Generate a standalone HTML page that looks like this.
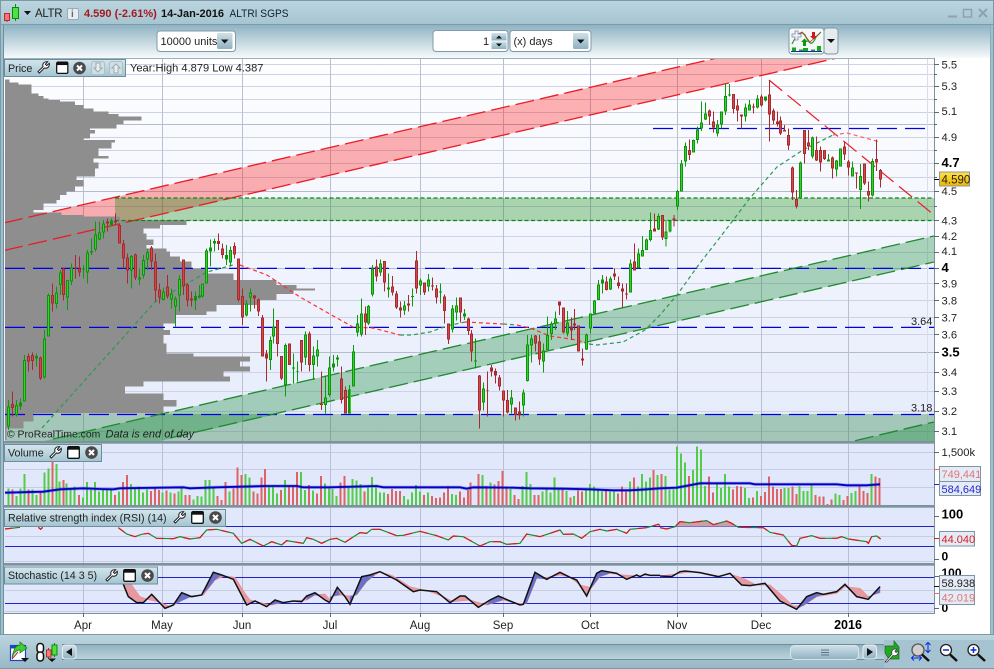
<!DOCTYPE html>
<html><head><meta charset="utf-8"><title>ALTR</title>
<style>
html,body{margin:0;padding:0;width:994px;height:669px;overflow:hidden;background:#fff}
svg{display:block}
text{font-family:"Liberation Sans",Arial,sans-serif;font-size:11px;fill:#222}
.b{font-weight:bold}
.ax{font-size:11.2px;fill:#222}
.lab{font-size:11px}
.cw{fill:none;stroke-width:3}
.cb{fill:none;stroke-width:9}
.ci{fill:none;stroke-width:3}
</style></head><body>
<svg width="994" height="669" viewBox="0 0 994 669" xmlns="http://www.w3.org/2000/svg">
<defs>
<linearGradient id="gT" x1="0" y1="0" x2="0" y2="1"><stop offset="0" stop-color="#bcd6e0"/><stop offset="1" stop-color="#a6c5d2"/></linearGradient>
<linearGradient id="gTool" x1="0" y1="0" x2="0" y2="1"><stop offset="0" stop-color="#8fb3c3"/><stop offset="1" stop-color="#f6fafb"/></linearGradient>
<linearGradient id="gPlot" x1="0" y1="0" x2="0" y2="1"><stop offset="0" stop-color="#fefeff"/><stop offset="1" stop-color="#e5ebfb"/></linearGradient>
<linearGradient id="gTab" x1="0" y1="0" x2="0" y2="1"><stop offset="0" stop-color="#d4e6ed"/><stop offset="1" stop-color="#a3c4d1"/></linearGradient>
<linearGradient id="gBtn" x1="0" y1="0" x2="0" y2="1"><stop offset="0" stop-color="#cfe0e7"/><stop offset="1" stop-color="#8fb1c1"/></linearGradient>
<linearGradient id="gBot" x1="0" y1="0" x2="0" y2="1"><stop offset="0" stop-color="#bcd5de"/><stop offset="1" stop-color="#97b8c6"/></linearGradient>
<linearGradient id="gTrack" x1="0" y1="0" x2="0" y2="1"><stop offset="0" stop-color="#8fb0be"/><stop offset="1" stop-color="#bcd4dc"/></linearGradient>
<linearGradient id="gGold" x1="0" y1="0" x2="0" y2="1"><stop offset="0" stop-color="#ffe14a"/><stop offset="1" stop-color="#f0b400"/></linearGradient>
<clipPath id="cP"><rect x="5" y="59" width="929" height="382"/></clipPath>
<clipPath id="cV"><rect x="5" y="444" width="929" height="61"/></clipPath>
<symbol id="wr" viewBox="0 0 14 14"><path d="M1 11.5 L6.5 6 C5.5 3 7.5 .2 11.5 .8 L9 3.5 L10.5 5 L13.2 2.5 C13.8 6.5 11 8.5 8 7.5 L2.5 13 Z" fill="#fff" stroke="#111" stroke-width="1"/></symbol>
<symbol id="wi" viewBox="0 0 13 13"><rect x=".7" y=".7" width="11.6" height="11.6" rx="1.2" fill="#fff" stroke="#111" stroke-width="1.3"/><rect x=".7" y=".7" width="11.6" height="3" fill="#111"/></symbol>
<symbol id="cl" viewBox="0 0 13 13"><circle cx="6.5" cy="6.5" r="6.3" fill="#4a4a4a"/><path d="M4 4L9 9M9 4L4 9" stroke="#fff" stroke-width="2"/></symbol>
</defs>

<!-- chrome -->
<rect width="994" height="669" fill="#9dc0ce"/>
<rect x="0" y="0" width="994" height="24" fill="url(#gT)"/>
<rect x="0" y="0" width="994" height="1" fill="#7e98a5"/>
<rect x="0" y="24" width="994" height="1" fill="#7c9cab"/>
<rect x="4" y="25" width="986" height="33" fill="url(#gTool)"/>
<rect x="4" y="58" width="986" height="577" fill="#fff"/>
<rect x="0" y="0" width="1" height="669" fill="#7e98a5"/>
<rect x="3" y="25" width="1" height="610" fill="#6f8e9c"/>
<rect x="993" y="0" width="1" height="669" fill="#7e98a5"/>
<rect x="990" y="25" width="1" height="610" fill="#8fa9b5"/>

<!-- title bar -->
<g>
<path d="M7 14V22" stroke="#a03030"/><rect x="4.500" y="13.500" width="5" height="7" fill="#ff7070" stroke="#b03030"/>
<path d="M15.500 4V21" stroke="#0a8a0a"/><rect x="12.500" y="7.500" width="6" height="11" fill="#50e040" stroke="#0a8a0a"/>
<path d="M24 11H31L27.500 15Z" fill="#111"/>
</g>
<text x="35" y="17" style="font-size:11.500px" textLength="27.500">ALTR</text>
<rect x="67.500" y="8.500" width="11" height="11" rx="1.500" fill="#e8eef0" stroke="#9ab"/>
<text x="71" y="17" class="b" style="fill:#667;font-size:10px">i</text>
<text x="84" y="17" class="b" style="fill:#a31a1e;font-size:11px">4.590 (-2.61%)</text>
<text x="161" y="17" class="b" style="font-size:11px;fill:#111">14-Jan-2016</text>
<text x="229.500" y="17" style="font-size:11px;fill:#123" textLength="59" lengthAdjust="spacingAndGlyphs">ALTRI SGPS</text>
<rect x="948" y="15.500" width="9" height="2" fill="#8da3af"/>
<rect x="963.500" y="9.500" width="8" height="7.500" fill="none" stroke="#8da3af" stroke-width="1.500"/>
<path d="M979 9L987 17M987 9L979 17" stroke="#8da3af" stroke-width="2"/>

<!-- toolbar -->
<rect x="157" y="31" width="78.500" height="20.500" rx="3" fill="#fff" stroke="#7f9aa8"/>
<text x="160.500" y="45" style="font-size:11px">10000 units</text>
<rect x="217" y="33" width="15.500" height="16" rx="1.500" fill="url(#gBtn)"/>
<path d="M221 39.500H228.500L224.700 43.500Z" fill="#111"/>
<rect x="433" y="30.500" width="75" height="21" rx="3" fill="#fff" stroke="#7f9aa8"/>
<text x="483" y="45" style="font-size:11px">1</text>
<rect x="491.500" y="33" width="15" height="7.500" fill="url(#gBtn)"/><rect x="491.500" y="41.500" width="15" height="7.500" fill="url(#gBtn)"/>
<path d="M496 38.500H502L499 35.500Z M496 43.500H502L499 46.500Z" fill="#111"/>
<rect x="510" y="30.500" width="81" height="21" rx="3" fill="#fff" stroke="#7f9aa8"/>
<text x="513.500" y="45" style="font-size:11px">(x) days</text>
<rect x="573" y="33" width="15.500" height="16" rx="1.500" fill="url(#gBtn)"/>
<path d="M577 39.500H584.500L580.700 43.500Z" fill="#111"/>
<rect x="789" y="28" width="35" height="26" rx="3" fill="#f4f7f8" stroke="#7f9aa8"/>
<rect x="824" y="28" width="14" height="26" rx="3" fill="#e6ebee" stroke="#7f9aa8"/>
<path d="M827 39H835L831 43Z" fill="#111"/>
<path d="M792 44C797 34 801 30 805 35C809 44 812 47 816 37L821 32" fill="none" stroke="#2a9a2a" stroke-width="1.200"/>
<path d="M795 39 L802 32 L810 42 L820 33" fill="none" stroke="#c03030" stroke-width=".8"/>
<path d="M795 31H798V34H801V37H798V40H795V37H792V34H795Z" fill="#eef" stroke="#889" stroke-width=".8"/>
<path d="M803 46V42H801L804.500 38.500L808 42H806V46Z" fill="#0a9a0a"/>
<path d="M812 32V36H810L813.500 39.500L817 36H815V32Z" fill="#d01818"/>
<path d="M792 51V47.500H796V51ZM799 51V49.500H803V51ZM803 51V48H808V51ZM811 51V49.500H815V51ZM817 51V46H821V51Z" fill="#0fae0f"/>
<rect x="791" y="51" width="31" height="1" fill="#2222bb"/>

<!-- price plot -->
<rect x="4" y="58" width="930" height="383" fill="url(#gPlot)"/>
<g stroke="#cdd2e4" stroke-width="1" fill="none" shape-rendering="crispEdges">
<path d="M5 64.500H934M5 74.500H934M5 86.500H934M5 99.500H934M5 112.500H934M5 137.500H934M5 150.500H934M5 163.500H934M5 177.500H934M5 206.500H934M5 220.500H934M5 236.500H934M5 252.500H934M5 283.500H934M5 300.500H934M5 317.500H934M5 334.500H934M5 372.500H934M5 391.500H934M5 411.500H934M5 431.500H934"/>
<path stroke="#b4bbcb" d="M5 124.500H934M5 191.500H934M5 268.500H934M5 352.500H934"/>
<path stroke="#b9c0d2" d="M83.500 59V441M162.500 59V441M242.500 59V441M330.500 59V441M420.500 59V441M503.500 59V441M590.500 59V441M677.500 59V441M761.500 59V441M848.500 59V441"/>
<path stroke="#d8ddec" d="M927.500 59V441"/>
</g>
<g clip-path="url(#cP)">
<polygon points="4,222.900 717,58 837,58 4,251" fill="#ff0000" fill-opacity=".3"/>
<rect x="115" y="198" width="819" height="22.500" fill="#008000" fill-opacity=".3"/>
<rect x="4" y="414" width="930" height="27" fill="#0a7020" fill-opacity=".3"/>
<polygon points="44,441 934,236 934,262 160,441" fill="#008020" fill-opacity=".3"/>
<polygon points="855,441 934,422 934,441" fill="#008020" fill-opacity=".3"/>
<!-- volume profile -->
<g fill="#8e8e8e" shape-rendering="crispEdges">
<path transform="translate(0,70) scale(.33333)" d="M12 28H28V38H55V43H95V70H115V78H130V86H145V90H180V95H225V105H250V115H280V125H325V132H355V140H425V152H370V162H350V175H270V180H285V190H270V205H250V210H345V218H335V235H295V258H325V265H280V278H295V295H285V320H230V335H250V350H215V355H185V361H12Z"/>
<path transform="translate(0,180) scale(.33333)" d="M12 0H250V5H245V20H225V35H200V45H180V60H170V70H130V80H130V90H100V98H185V105H250V110H360V120H560V135H480V145H430V160H440V178H460V195H440V205H500V215H510V230H540V245H575V265H620V280H700V300H830V315H890V325H945V332H880V342H830V360H780V375H650V395H620V405H525V430H490V450H510V465H490V490H500V520H580V530H750V545H720V560H750V575H670V590H690V605H430V620H375V640H490V660H530V680H490V700H100V725H70V745H20V780H12Z"/>
</g>
<!-- blue levels -->
<g stroke="#0000e6" stroke-width="1.300" stroke-dasharray="20 8" fill="none">
<path d="M653 128.500H930"/>
<path d="M5 268.400H934"/>
<path d="M5 327.400H934"/>
<path d="M5 414.500H934"/>
</g>
<!-- channel lines -->
<g fill="none" stroke-width="1.300" stroke-dasharray="19 6">
<path d="M4 222.900L717 58M4 250.500L837 58" stroke="#ea1c24"/>
<path d="M53 439L934 236M170 438L934 262M855 440.700L934 422" stroke="#1f8a2c"/>
</g>
<path d="M115 198H934" stroke="#0a8a0a" stroke-dasharray="4 2.500" stroke-width="1.200"/>
<path d="M115 220.500H934" stroke="#0a8a0a" stroke-dasharray="4 2.500" stroke-width="1.200"/>
<!-- trend -->
<path d="M769 80L934 215" fill="none" stroke="#ea1c24" stroke-width="1.200" stroke-dasharray="17 7"/>
<!-- MA -->
<g fill="none" stroke-width="1.200" stroke-dasharray="4 3">
<path stroke="#2a9a50" d="M42 428L155 302L207 272L233 265"/>
<path stroke="#ff3030" d="M240 265L267 275L300 297L328 313L353 327L373 328L400 335"/>
<path stroke="#2a9a50" d="M400 335L412 335L430 332L447 326L465 322"/>
<path stroke="#ff3030" d="M465 322L503 324"/>
<path stroke="#2a9a50" d="M503 324L517 325"/>
<path stroke="#ff3030" d="M517 325L530 328L550 336L577 340L589 344"/>
<path stroke="#2a9a50" d="M589 344L597 345L623 342L645 330L660 315L677 295L700 263L718 240L750 198L777 167L803 150L833 135"/>
<path stroke="#ff6060" d="M833 135L847 133L880 142"/>
</g>
<!-- candles, set 1 -->
<g transform="translate(0,180) scale(.33333)" shape-rendering="crispEdges">
<path class="cw" stroke="#0a9a0a" d="M25 660V750M49 660V710M61 655V690M73 525V665M109 520V560M133 450V595M145 340V470M169 320V385M181 270V345M203 300V390M215 250V315M251 255V295M263 210V310M275 175V225M287 125V215M299 125V180M311 120V175M335 115V140M395 225V325M419 265V315M431 225V295M443 205V270M491 322V362M515 325V385M527 350V440M539 285V395M587 335V390M599 315V355M607 310V352M619 205V310M631 178V260M643 175V215M679 195V255M691 200V260M739 360V410M751 325V395M811 470V570M821 385V490M857 490V650M881 520V610M893 545V605M917 455V555M941 500V600M953 480V560M977 590V700M989 530V650"/>
<path class="cb" stroke="#0a960a" d="M25 680V740M49 675V705M61 667V680M73 540V665M109 528V535M133 475V592M145 345V470M169 338V372M181 277V315M203 300V352M215 262V305M251 265V268M263 217V278M275 213V218M287 163V208M299 157V178M311 130V158M335 122V135M395 228V272M419 292V298M431 240V287M443 216V238M491 335V360M515 340V358M527 355V380M539 297V347M587 348V362M599 346V352M607 310V350M619 211V310M631 202V215M643 183V190M679 225V238M691 210V247M739 370V407M751 337V352M811 480V540M821 440V470M857 495V615M881 562V565M893 573V575M917 463V533M941 527V555M953 508V530M977 652V675M989 563V645"/>
<path class="ci" stroke="#40cc30" d="M25 683V737M49 678V702M73 543V662M133 478V589M145 348V467M169 341V369M181 280V312M203 303V349M215 265V302M263 220V275M287 166V205M299 160V175M311 133V155M395 231V269M431 243V284M443 219V235M491 338V357M515 343V355M527 358V377M539 300V344M607 313V347M619 214V307M691 213V244M739 373V404M751 340V349M811 483V537M821 443V467M857 498V612M917 466V530M941 530V552M953 511V527M977 655V672M989 566V642"/>
<path class="cw" stroke="#a82a2e" d="M37 635V710M85 520V575M97 518V570M121 530V600M157 310V395M191 262V362M227 225V295M239 230V290M323 115V155M347 100V135M359 130V190M371 180V265M383 220V310M407 220V300M455 198V270M467 220V365M479 310V370M503 285V355M551 238V345M563 310V380M575 335V380M655 160V210M667 190V235M703 188V235M715 235V365M727 325V435M763 345V385M775 355V408M787 405V530M799 510V605M833 420V530M845 530V600M869 490V555M905 480V575M929 455V575M965 575V690"/>
<path class="cb" stroke="#a82a2e" d="M37 672V684M85 528V545M97 525V543M121 533V595M157 345V370M191 265V345M227 262V265M239 265V278M323 125V130M347 122V127M359 135V190M371 190V235M383 232V272M407 223V293M455 202V245M467 245V332M479 328V352M503 320V350M551 238V320M563 313V362M575 355V362M655 183V192M667 205V225M703 198V223M715 235V360M727 348V413M763 346V355M775 358V395M787 412V530M799 520V535M833 420V492M845 528V595M869 490V555M905 480V548M929 460V555M965 672V675"/>
<path class="ci" stroke="#d04848" d="M37 675V681M85 531V542M97 528V540M121 536V592M157 348V367M191 268V342M239 268V275M359 138V187M371 193V232M383 235V269M407 226V290M455 205V242M467 248V329M479 331V349M503 323V347M551 241V317M563 316V359M667 208V222M703 201V220M715 238V357M727 351V410M775 361V392M787 415V527M833 423V489M845 531V592M869 493V552M905 483V545M929 463V552"/>
</g>
<!-- candles, set 2 -->
<g transform="translate(330,200) scale(.33333)" shape-rendering="crispEdges">
<path class="cw" stroke="#0a9a0a" d="M10 465V515M22 465V500M58 555V640M70 435V560M82 345V410M94 295V410M116 315V375M128 195V290M152 178V228M175 220V293M223 303V345M247 265V320M271 235V285M295 222V275M331 250V310M367 315V398M379 292V362M403 327V360M436 415V505M460 548V632M544 570V640M580 568V650M592 405V545M604 405V488M640 430V518M652 350V450M664 365V420M676 335V390M712 333V410M769 400V450M781 340V400M793 300V340M805 240V300M817 225V280M841 230V270M901 178V278M925 145V205M937 108V170M949 115V150M961 38V125M985 40V90"/>
<path class="cb" stroke="#0a960a" d="M10 490V503M22 472V478M58 568V640M70 455V560M82 370V397M94 340V403M116 318V370M128 205V283M152 190V218M175 262V268M223 316V332M247 288V291M271 241V256M295 238V260M331 274V278M367 325V388M379 316V338M403 340V350M436 481V485M460 565V607M544 592V613M580 577V617M592 433V543M604 415V437M640 452V485M652 405V450M664 370V402M676 355V370M712 367V400M769 403V448M781 340V385M793 302V340M805 253V300M817 238V250M841 235V268M901 190V278M925 160V204M937 150V170M949 118V150M961 90V120M985 48V88"/>
<path class="ci" stroke="#40cc30" d="M61 571V637M70 458V557M82 373V394M94 343V400M116 321V367M128 208V280M152 193V215M223 319V329M271 244V253M295 241V257M367 328V385M379 319V335M460 568V604M544 595V610M580 580V614M592 436V540M604 418V434M640 455V482M652 408V447M664 373V399M676 358V367M712 370V397M769 406V445M781 343V382M793 305V337M805 256V297M841 238V265M901 193V275M925 163V201M937 153V167M949 121V147M961 93V117M985 51V85"/>
<path class="cw" stroke="#a82a2e" d="M34 500V610M46 560V640M106 320V405M140 178V245M163 183V275M187 228V287M199 273V327M211 305V352M235 285V335M259 153V280M283 247V285M307 232V272M319 255V310M343 283V370M355 370V432M391 292V368M415 352V405M424 390V485M448 525V685M472 515V650M484 495V530M496 505V550M508 525V572M520 572V650M532 570V640M556 622V662M568 605V658M616 405V455M628 405V495M688 305V345M700 322V400M724 352V420M733 327V390M745 377V455M757 445V497M829 230V272M853 205V240M865 230V265M877 250V323M889 250V298M913 130V212M973 40V95"/>
<path class="cb" stroke="#a82a2e" d="M34 535V600M46 570V640M106 340V368M140 200V230M163 183V248M187 260V277M199 280V322M211 322V332M235 310V316M259 182V265M283 248V277M307 256V260M319 265V292M343 290V333M355 370V418M391 292V338M415 355V393M424 400V455M448 527V632M472 570V572M484 502V515M496 513V526M508 532V560M520 572V602M532 600V638M556 622V645M568 634V646M616 406V430M628 424V478M688 305V316M700 322V398M724 380V392M733 370V376M745 377V455M757 475V482M829 244V270M853 220V230M865 247V258M877 265V275M889 280V283M913 185V211M973 85V95"/>
<path class="ci" stroke="#d04848" d="M34 538V597M46 573V637M106 343V365M140 203V227M163 186V245M187 263V274M199 283V319M259 185V262M283 251V274M319 268V289M343 293V330M355 373V415M391 295V335M415 358V390M424 403V452M448 530V629M508 535V557M520 575V599M532 603V635M556 625V642M616 409V427M628 427V475M700 325V395M745 380V452M829 247V267M913 188V208"/>
</g>
<!-- candles, set 3 -->
<g transform="translate(660,0) scale(.33333)" shape-rendering="crispEdges">
<path class="cw" stroke="#0a9a0a" d="M18 660V740M30 660V697M52 570V630M64 480V575M76 428V500M100 418V458M112 380V430M124 305V393M136 308V360M172 360V410M184 335V385M196 250V345M208 252V290M256 310V365M268 300V332M292 285V325M316 290V305M421 485V597M457 410V475M505 462V485M529 480V530M541 445V500M577 485V530M601 492V627M637 475V590"/>
<path class="cb" stroke="#0a960a" d="M18 695V717M30 662V695M52 573V620M64 490V575M76 438V485M100 420V458M112 388V420M124 367V385M136 340V358M172 373V400M184 335V373M196 288V335M208 283V287M256 322V350M268 313V332M292 295V323M316 290V302M421 487V595M457 412V470M505 478V485M529 482V508M541 445V500M577 502V530M601 528V570M637 483V587"/>
<path class="ci" stroke="#40cc30" d="M18 698V714M30 665V692M52 576V617M64 493V572M76 441V482M100 423V455M112 391V417M124 370V382M136 343V355M172 376V397M184 338V370M196 291V332M256 325V347M268 316V329M292 298V320M421 490V592M457 415V467M529 485V505M541 448V497M577 505V527M601 531V567M637 486V584"/>
<path class="cw" stroke="#a82a2e" d="M8 645V720M42 645V680M88 418V480M148 328V375M160 335V398M220 282V340M232 297V365M244 343V385M280 310V340M304 283V320M328 240V425M340 325V372M352 335V380M362 350V405M374 375V395M386 385V450M397 500V600M409 570V625M433 390V490M445 390V450M469 410V483M481 440V515M493 450V480M517 470V535M553 425V480M565 480V527M589 518V565M613 490V555M625 545V605M649 418V513M661 507V563"/>
<path class="cb" stroke="#a82a2e" d="M8 645V712M42 655V662M88 450V465M148 332V350M160 365V383M220 282V327M232 316V332M244 343V350M280 320V323M304 290V317M328 283V343M340 332V362M352 365V372M362 362V400M374 390V395M386 405V436M397 502V577M409 597V620M433 390V462M445 427V440M469 450V482M481 450V487M493 450V477M517 472V505M553 440V463M565 484V502M589 518V520M613 490V550M625 573V587M649 477V488M661 510V538"/>
<path class="ci" stroke="#d04848" d="M8 648V709M88 453V462M148 335V347M160 368V380M220 285V324M232 319V329M304 293V314M328 286V340M340 335V359M362 365V397M386 408V433M397 505V574M409 600V617M433 393V459M445 430V437M469 453V479M481 453V484M493 453V474M517 475V502M553 443V460M565 487V499M613 493V547M625 576V584M649 480V485M661 513V535"/>
</g>
<text x="911" y="325" style="font-size:11px;fill:#222">3.64</text>
<text x="911" y="411.500" style="font-size:11px;fill:#222">3.18</text>
<text x="7" y="437.500" style="font-size:10.400px;fill:#222">© ProRealTime.com</text>
<text x="105.500" y="437.500" style="font-size:11px;font-style:italic;fill:#222">Data is end of day</text>
</g>
<rect x="4" y="441" width="930" height="2" fill="#7f929c"/>
<rect x="4" y="58" width="930" height="1" fill="#9bb0bb"/>

<!-- volume panel -->
<rect x="4" y="444" width="930" height="61" fill="#e1e8fb"/>
<g stroke="#c6cde2" fill="none" shape-rendering="crispEdges"><path d="M5 452.500H934M5 469.500H934M5 487.500H934"/><path stroke="#b9c0d2" d="M83.500 444V505M162.500 444V505M242.500 444V505M330.500 444V505M420.500 444V505M503.500 444V505M590.500 444V505M677.500 444V505M761.500 444V505M848.500 444V505"/></g>
<g transform="translate(0,440) scale(.33333)" fill="none" stroke-width="6" shape-rendering="crispEdges">
<path stroke="#53cc47" d="M25 145V195M49 168V195M61 145V195M73 102V195M97 148V195M109 165V195M133 98V195M145 85V195M169 72V195M178 125V195M200 130V195M212 145V195M224 140V195M249 172V195M261 126V195M273 150V195M285 126V195M297 155V195M309 150V195M321 148V195M333 148V195M357 155V195M393 132V195M405 142V195M417 140V195M429 158V195M441 148V195M487 158V195M511 158V195M535 155V195M545 142V195M581 178V195M593 168V195M605 170V195M617 120V195M629 120V195M641 140V195M689 155V195M737 102V195M749 112V195M807 138V195M819 138V195M831 160V195M855 120V195M903 96V195M915 150V195M939 152V195M975 130V195M987 145V195"/>
<path stroke="#dd6464" d="M37 148V195M85 148V195M121 155V195M157 65V195M190 120V195M237 165V195M345 165V195M369 126V195M381 105V195M453 153V195M465 145V195M477 150V195M499 152V195M523 160V195M557 165V195M569 165V195M653 168V195M665 180V195M677 126V195M701 145V195M713 83V195M725 105V195M761 155V195M773 160V195M785 113V195M795 87V195M843 150V195M867 140V195M879 140V195M891 96V195M927 135V195M951 160V195M963 108V195"/>
</g>
<g transform="translate(330,440) scale(.33333)" fill="none" stroke-width="6" shape-rendering="crispEdges">
<path stroke="#53cc47" d="M8 147V195M20 168V195M56 140V195M68 117V195M80 122V195M92 132V195M114 140V195M126 111V195M138 140V195M150 158V195M162 158V195M222 168V195M234 178V195M246 158V195M258 135V195M270 155V195M294 158V195M366 162V195M378 165V195M458 105V195M482 128V195M542 147V195M578 138V195M590 96V195M602 132V195M638 155V195M650 147V195M662 158V195M674 113V195M686 147V195M710 153V195M732 168V195M768 150V195M780 132V195M792 140V195M804 152V195M816 155V195M840 155V195M852 155V195M900 125V195M924 140V195M936 102V195M948 125V195M960 113V195M982 105V195"/>
<path stroke="#dd6464" d="M32 128V195M44 108V195M104 155V195M174 162V195M186 147V195M198 153V195M210 153V195M282 165V195M306 168V195M318 174V195M330 172V195M342 158V195M354 138V195M390 155V195M402 173V195M414 150V195M422 128V195M446 102V195M470 138V195M494 134V195M506 123V195M518 93V195M530 140V195M554 165V195M566 177V195M614 165V195M626 165V195M698 147V195M722 173V195M744 152V195M756 155V195M828 150V195M864 160V195M876 140V195M888 155V195M912 113V195M970 90V195"/>
</g>
<g transform="translate(660,440) scale(.33333)" fill="none" stroke-width="6" shape-rendering="crispEdges">
<path stroke="#53cc47" d="M17 108V195M29 148V195M41 148V195M51 20V195M63 40V195M75 68V195M99 90V195M111 20V195M123 28V195M135 138V195M171 132V195M183 144V195M195 102V195M207 140V195M255 144V195M267 174V195M291 153V195M373 144V195M385 144V195M419 138V195M431 153V195M443 153V195M455 135V195M527 161V195M539 165V195M575 159V195M587 153V195M635 102V195"/>
<path stroke="#dd6464" d="M5 102V195M87 108V195M147 110V195M159 158V195M219 148V195M231 138V195M243 140V195M279 173V195M303 168V195M315 156V195M327 110V195M339 140V195M351 147V195M363 147V195M397 140V195M409 162V195M467 165V195M479 170V195M491 170V195M503 192V195M515 178V195M551 180V195M563 168V195M599 138V195M611 153V195M623 159V195M647 110V195M659 114V195"/>
</g>
<g clip-path="url(#cV)" fill="none" transform="">
<g transform="translate(0,440) scale(.33333)">
<path stroke="#0000c8" stroke-width="10" stroke-opacity=".25" d="M15 158L130 155L180 148L250 145L300 147L340 148L360 145L550 142L570 145L650 142L800 138L890 138L910 142L990 142L1130 138L1150 142L1380 142L1400 146L1420 142L1540 143L1590 145L1690 146L1770 148L1840 151L1890 151L1940 148L1980 145L2030 143L2100 130L2250 130L2265 133L2510 133L2540 136L2600 136L2640 133"/>
<path stroke="#0000c8" stroke-width="5.500" d="M15 158L130 155L180 148L250 145L300 147L340 148L360 145L550 142L570 145L650 142L800 138L890 138L910 142L990 142L1130 138L1150 142L1380 142L1400 146L1420 142L1540 143L1590 145L1690 146L1770 148L1840 151L1890 151L1940 148L1980 145L2030 143L2100 130L2250 130L2265 133L2510 133L2540 136L2600 136L2640 133"/>
</g>
</g>
<rect x="4" y="505" width="930" height="2" fill="#7f929c"/>
<rect x="4" y="443" width="930" height="1" fill="#9bb0bb"/>

<!-- RSI panel -->
<rect x="4" y="508" width="930" height="55" fill="#e1e8fb"/>
<g stroke="#c6cde2" fill="none" shape-rendering="crispEdges"><path d="M5 536.500H934M5 561.500H934"/><path stroke="#b9c0d2" d="M83.500 508V563M162.500 508V563M242.500 508V563M330.500 508V563M420.500 508V563M503.500 508V563M590.500 508V563M677.500 508V563M761.500 508V563M848.500 508V563"/></g>
<path d="M5 526.500H934M5 546.500H934" stroke="#2222cc" stroke-width="1" shape-rendering="crispEdges"/>
<path transform="translate(660,440) scale(.33333)" d="M45 260L60 245L90 248L140 242L160 254L200 243L215 250L235 260Z" fill="#c9a0ae"/>
<g fill="none" stroke-width="3.600">
<g transform="translate(0,440) scale(.33333)">
<path stroke="#1f8a2c" d="M15 267L60 262M115 262L122 268L128 262M355 263L380 282L405 290L425 283L445 280L470 295L520 296L540 290L570 297L600 293L620 270L650 268L680 275L700 280L725 310L750 298L790 318L815 305L845 315L860 302L910 310L920 293L940 298L965 310L990 298"/>
<path stroke="#e01818" stroke-dasharray="22 20" d="M15 267L60 262M115 262L122 268L128 262M355 263L380 282L405 290L425 283L445 280L470 295L520 296L540 290L570 297L600 293L620 270L650 268L680 275L700 280L725 310L750 298L790 318L815 305L845 315L860 302L910 310L920 293L940 298L965 310L990 298"/>
</g>
<g transform="translate(330,440) scale(.33333)">
<path stroke="#1f8a2c" d="M0 298L20 295L45 307L60 297L90 278L110 280L125 268L150 268L200 287L220 286L270 274L320 287L355 300L370 288L400 290L450 318L480 305L510 305L530 313L570 310L590 282L630 290L690 270L700 283L730 282L755 295L780 275L810 268L830 273L860 268L890 280L900 268L950 263L985 253L990 256"/>
<path stroke="#e01818" stroke-dasharray="26 22" d="M0 298L20 295L45 307L60 297L90 278L110 280L125 268L150 268L200 287L220 286L270 274L320 287L355 300L370 288L400 290L450 318L480 305L510 305L530 313L570 310L590 282L630 290L690 270L700 283L730 282L755 295L780 275L810 268L830 273L860 268L890 280L900 268L950 263L985 253L990 256"/>
</g>
<g transform="translate(660,440) scale(.33333)">
<path stroke="#1f8a2c" d="M0 263L20 267L45 260L60 245L90 248L140 242L160 254L200 243L215 250L235 262L310 263L330 277L370 285L395 316L410 318L420 295L455 287L480 295L530 295L545 290L565 297L620 305L625 310L635 290L650 288L662 297"/>
<path stroke="#e01818" stroke-dasharray="30 22" d="M0 263L20 267L45 260L60 245L90 248L140 242L160 254L200 243L215 250L235 262L310 263L330 277L370 285L395 316L410 318L420 295L455 287L480 295L530 295L545 290L565 297L620 305L625 310L635 290L650 288L662 297"/>
</g>
</g>
<rect x="4" y="563" width="930" height="2" fill="#7f929c"/>
<rect x="4" y="507" width="930" height="1" fill="#9bb0bb"/>

<!-- Stochastic panel -->
<rect x="4" y="566" width="930" height="47" fill="#e1e8fb"/>
<g stroke="#c6cde2" fill="none" shape-rendering="crispEdges"><path d="M5 590.500H934M5 611.500H934"/><path stroke="#b9c0d2" d="M83.500 566V613M162.500 566V613M242.500 566V613M330.500 566V613M420.500 566V613M503.500 566V613M590.500 566V613M677.500 566V613M761.500 566V613M848.500 566V613"/></g>
<path d="M5 577.500H934M5 603.500H934" stroke="#2222cc" stroke-width="1" shape-rendering="crispEdges"/>
<g transform="translate(0,440) scale(.33333)">
<path fill="#e59aa2" stroke="#ea8a92" stroke-width="2" d="M370 433L385 470L410 488L430 488L455 463L495 505L520 495L545 458L575 470L605 465L640 397L665 405L700 418L740 495L765 483L800 500L825 480L850 488L880 483L905 485L920 468L945 458L975 480L990 488L990 480L975 462L945 465L920 480L880 482L850 487L815 495L790 490L750 480L735 460L705 412L675 408L645 420L610 465L570 468L540 485L510 500L480 487L450 480L420 470L395 435L370 410Z"/>
<path fill="#6a70c4" d="M520 495L545 458L575 470L540 485ZM605 465L640 397L665 405L645 420L625 445ZM825 480L810 495L850 487ZM920 468L945 458L960 470L945 465L920 480Z"/>
<path fill="none" stroke="#111" stroke-width="4.500" d="M370 433L385 470L410 488L430 488L455 463L495 505L520 495L545 458L575 470L605 465L640 397L665 405L700 418L740 495L765 483L800 500L825 480L850 488L880 483L905 485L920 468L945 458L975 480L990 488"/>
</g>
<g transform="translate(330,440) scale(.33333)">
<path fill="#e59aa2" stroke="#ea8a92" stroke-width="2" d="M0 485L22 442L45 470L60 493L95 410L120 405L150 395L200 420L250 455L270 450L320 455L360 488L390 468L405 468L445 502L480 480L505 468L540 483L570 495L580 493L615 397L650 418L690 397L720 412L740 420L770 468L800 400L815 392L860 400L890 418L920 405L930 410L945 402L960 406L990 406L990 406L960 405L920 408L880 405L840 400L810 410L785 443L750 435L720 412L690 405L650 412L620 415L590 490L560 490L520 480L470 495L420 480L370 485L340 470L300 455L240 440L190 408L150 395L135 405L110 425L80 465L60 468L30 465L0 470Z"/>
<path fill="#6a70c4" d="M0 485L22 442L30 465L0 470ZM60 468L60 493L95 410L120 405L135 405L110 425L80 465ZM580 493L615 397L650 418L620 415L590 490ZM770 468L800 400L815 392L840 400L810 410L785 443ZM480 480L505 468L520 480L470 495Z"/>
<path fill="none" stroke="#111" stroke-width="4.500" d="M0 485L22 442L45 470L60 493L95 410L120 405L150 395L200 420L250 455L270 450L320 455L360 488L390 468L405 468L445 502L480 480L505 468L540 483L570 495L580 493L615 397L650 418L690 397L720 412L740 420L770 468L800 400L815 392L860 400L890 418L920 405L930 410L945 402L960 406L990 406"/>
</g>
<g transform="translate(660,440) scale(.33333)">
<path fill="#e59aa2" stroke="#ea8a92" stroke-width="2" d="M0 408L35 410L60 395L75 393L120 398L175 410L210 400L245 435L270 437L315 430L360 483L410 508L440 470L470 458L490 463L530 455L555 433L590 470L625 478L660 440L660 458L625 470L600 445L555 440L530 460L470 470L430 497L400 498L370 470L330 435L290 435L250 415L210 402L175 408L100 395L40 403L0 408Z"/>
<path fill="#6a70c4" d="M35 410L60 395L75 393L40 403ZM415 505L440 470L470 458L490 463L470 470L430 497ZM625 478L660 440L660 458L625 470Z"/>
<path fill="none" stroke="#111" stroke-width="4.500" d="M0 408L35 410L60 395L75 393L120 398L175 410L210 400L245 435L270 437L315 430L360 483L410 508L440 470L470 458L490 463L530 455L555 433L590 470L625 478L660 440"/>
</g>
<rect x="4" y="613" width="930" height="1" fill="#7f929c"/>
<rect x="4" y="565" width="930" height="1" fill="#9bb0bb"/>
<rect x="934" y="58" width="1" height="556" fill="#7f929c"/>

<!-- right axis ticks -->
<path stroke="#5b6b75" fill="none" shape-rendering="crispEdges" d="M934 64.500H939M934 74.500H937M934 86.500H939M934 99.500H937M934 112.500H939M934 124.500H937M934 137.500H939M934 150.500H937M934 163.500H939M934 177.500H937M934 191.500H939M934 206.500H937M934 220.500H939M934 236.500H939M934 252.500H939M934 268.500H939M934 283.500H939M934 300.500H939M934 317.500H939M934 334.500H939M934 352.500H939M934 372.500H939M934 391.500H939M934 411.500H939M934 431.500H939M934 452.500H939M934 516.500H939M934 559.500H939M934 576.500H939M934 608.500H939"/>
<path d="M934 179.500H939" stroke="#000" shape-rendering="crispEdges"/>
<g class="ax">
<text class="ax" x="941.500" y="68.500">5.5</text>
<text class="ax" x="941.500" y="90">5.3</text>
<text class="ax" x="941.500" y="115">5.1</text>
<text class="ax" x="941.500" y="141">4.9</text>
<text class="ax b" x="941.500" y="167" style="font-size:13px;fill:#000">4.7</text>
<text class="ax" x="941.500" y="195">4.5</text>
<text class="ax" x="941.500" y="224.500">4.3</text>
<text class="ax" x="941.500" y="240">4.2</text>
<text class="ax" x="941.500" y="255">4.1</text>
<text class="ax b" x="941.500" y="272" style="font-size:13px;fill:#000">4</text>
<text class="ax" x="941.500" y="287.500">3.9</text>
<text class="ax" x="941.500" y="304.500">3.8</text>
<text class="ax" x="941.500" y="321.500">3.7</text>
<text class="ax" x="941.500" y="338.500">3.6</text>
<text class="ax b" x="941.500" y="356.500" style="font-size:13px;fill:#000">3.5</text>
<text class="ax" x="941.500" y="376">3.4</text>
<text class="ax" x="941.500" y="395">3.3</text>
<text class="ax" x="941.500" y="415">3.2</text>
<text class="ax" x="941.500" y="435">3.1</text>
<text class="ax" x="941.500" y="456">1,500k</text>
<text class="ax" x="941.500" y="474">1,000k</text>
<text class="ax b" x="941.500" y="518.500" style="font-size:13px;fill:#000">100</text>
<text class="ax b" x="941.500" y="560.500" style="font-size:12px;fill:#000">0</text>
<text class="ax b" x="941.500" y="577" style="font-size:12px;fill:#000">100</text>
<text class="ax b" x="941.500" y="612" style="font-size:12px;fill:#000">0</text>
</g>
<rect x="939.500" y="172" width="30" height="14" fill="url(#gGold)" stroke="#8a95a0"/>
<text x="941.500" y="183.300" style="font-size:11.500px;fill:#222">4.590</text>
<path d="M934 469.500H939" stroke="#e07070" shape-rendering="crispEdges"/><path d="M934 484.500H939" stroke="#2222cc" shape-rendering="crispEdges"/>
<path d="M934 538.500H939" stroke="#d02020" shape-rendering="crispEdges"/><path d="M934 586.500H939" stroke="#111" shape-rendering="crispEdges"/><path d="M934 593.500H939" stroke="#e07070" shape-rendering="crispEdges"/>
<rect x="939.500" y="466.500" width="41" height="15" fill="#e4ebf6" stroke="#7d96a2"/>
<text x="941.500" y="478" style="font-size:11px;fill:#e07575">749,441</text>
<rect x="939.500" y="481.500" width="41" height="14" fill="#e4ebf6" stroke="#7d96a2"/>
<text x="941.500" y="493" style="font-size:11px;fill:#2a2ad0">584,649</text>
<rect x="939.500" y="531.500" width="35" height="14.500" fill="#e4ebf6" stroke="#7d96a2"/>
<text x="941.500" y="543" style="font-size:11px;fill:#dd1f1f">44.040</text>
<rect x="939.500" y="575.500" width="35" height="14.500" fill="#e4ebf6" stroke="#7d96a2"/>
<text x="941.500" y="587" style="font-size:11px;fill:#222">58.938</text>
<rect x="939.500" y="590" width="35" height="14.500" fill="#e4ebf6" stroke="#7d96a2"/>
<text x="941.500" y="601.500" style="font-size:11px;fill:#e07575">42.019</text>

<!-- date axis -->
<path stroke="#5b6b75" fill="none" shape-rendering="crispEdges" d="M83.500 613V617M162.500 613V617M242.500 613V617M330.500 613V617M420.500 613V617M503.500 613V617M590.500 613V617M677.500 613V617M761.500 613V617M848.500 613V617"/>
<g text-anchor="middle">
<text x="83" y="629" style="font-size:11.500px">Apr</text>
<text x="162" y="629" style="font-size:11.500px">May</text>
<text x="242" y="629" style="font-size:11.500px">Jun</text>
<text x="330" y="629" style="font-size:11.500px">Jul</text>
<text x="420" y="629" style="font-size:11.500px">Aug</text>
<text x="503" y="629" style="font-size:11.500px">Sep</text>
<text x="590" y="629" style="font-size:11.500px">Oct</text>
<text x="677" y="629" style="font-size:11.500px">Nov</text>
<text x="761" y="629" style="font-size:11.500px">Dec</text>
<text x="848" y="629" class="b" style="font-size:12.500px;fill:#000">2016</text>
</g>

<!-- panel tabs -->
<rect x="4.500" y="59.500" width="121" height="17" fill="url(#gTab)" stroke="#6f8e9c"/>
<text x="8" y="72" style="font-size:10.700px">Price</text>
<use href="#wr" x="37" y="61" width="13" height="13"/>
<use href="#wi" x="56" y="61.500" width="12.500" height="12.500"/>
<use href="#cl" x="73" y="61.500" width="13" height="13"/>
<g fill="none" stroke="#aebfc8"><rect x="91.500" y="61.500" width="13" height="13" rx="2" fill="#cfdfe5"/><rect x="109.500" y="61.500" width="13" height="13" rx="2" fill="#cfdfe5"/></g>
<path d="M96 63V68H94L98 72L102 68H100V63Z" fill="#e8eef0" stroke="#9aa8b0"/>
<path d="M114 73V68H112L116 64L120 68H118V73Z" fill="#e8eef0" stroke="#9aa8b0"/>
<text x="130" y="71.500" style="font-size:11.100px;fill:#222">Year:High 4.879 Low 4.387</text>

<rect x="4.500" y="444.500" width="97" height="17" fill="url(#gTab)" stroke="#6f8e9c"/>
<text x="8" y="456.500" style="font-size:10.700px">Volume</text>
<use href="#wr" x="49" y="446" width="13" height="13"/>
<use href="#wi" x="67" y="446" width="13" height="13"/>
<use href="#cl" x="85" y="446" width="13" height="13"/>

<rect x="4.500" y="509.500" width="221" height="17" fill="url(#gTab)" stroke="#6f8e9c"/>
<text x="8" y="521.500" style="font-size:10.700px">Relative strength index (RSI) (14)</text>
<use href="#wr" x="173" y="511" width="13" height="13"/>
<use href="#wi" x="191" y="511" width="13" height="13"/>
<use href="#cl" x="209" y="511" width="13" height="13"/>

<rect x="4.500" y="567" width="153" height="17" fill="url(#gTab)" stroke="#6f8e9c"/>
<text x="8" y="579" style="font-size:10.700px">Stochastic (14 3 5)</text>
<use href="#wr" x="105" y="569" width="13" height="13"/>
<use href="#wi" x="123" y="569" width="13" height="13"/>
<use href="#cl" x="141" y="569" width="13" height="13"/>

<!-- bottom bar -->
<rect x="0" y="635" width="994" height="34" fill="url(#gBot)"/>
<rect x="0" y="634" width="994" height="1" fill="#7e98a5"/>
<rect x="0" y="668" width="994" height="1" fill="#7e98a5"/>
<rect x="62" y="644" width="822" height="15.500" fill="url(#gTrack)"/>
<rect x="62" y="644" width="822" height="1" fill="#6f8e9c"/>
<rect x="62" y="659" width="822" height="1" fill="#6f8e9c"/>
<rect x="884" y="640" width="110" height="28" fill="#a5c3d0"/>
<rect x="62.500" y="645" width="13.500" height="14" rx="3" fill="url(#gBtn)" stroke="#e8f0f3"/>
<path d="M72 648V656L66 652Z" fill="#111"/>
<rect x="790.500" y="645.500" width="68" height="14" rx="4" fill="url(#gBtn)" stroke="#d8e6eb"/>
<path d="M821 650H829M821 652.500H829M821 655H829" stroke="#5e7986"/>
<rect x="863" y="645" width="13.500" height="14" rx="3" fill="url(#gBtn)" stroke="#e8f0f3"/>
<path d="M867 648V656L873 652Z" fill="#111"/>
<!-- bottom-left icons -->
<rect x="10.500" y="645.500" width="15" height="15" fill="#fff" stroke="#2244bb" stroke-width="1.200"/>
<rect x="10.500" y="645.500" width="15" height="3" fill="#2244bb"/>
<path d="M12 658C14 652 17 650 20 650V653L27 648L20 642V645C16 645 13 650 12 658Z" fill="#44cc33" stroke="#177a17" stroke-width=".7"/>
<path d="M12 659L18 652" stroke="#c02020"/>
<path d="M21 658H29L25 662Z" fill="#111"/>
<g fill="none" stroke="#111" stroke-width="1.500"><rect x="37" y="643.500" width="6.500" height="9" rx="3" fill="#fff"/><rect x="37" y="652" width="6.500" height="9" rx="3" fill="#fff"/></g>
<path d="M48.500 648V659" stroke="#a03030"/><rect x="46.500" y="650" width="4.500" height="7" fill="#ff7c7c" stroke="#b03030"/>
<path d="M54.500 643V657" stroke="#0a8a0a"/><rect x="52" y="645" width="5" height="10" fill="#50e040" stroke="#0a8a0a"/>
<path d="M48 658.500H56L52 662Z" fill="#111"/>
<!-- bottom-right icons -->
<path d="M885 653V646H894V641L899 647V659H889Z" fill="#23a823" stroke="#176e17" stroke-width=".7"/>
<path d="M885 662L892 654C891 651 893 648 897 649L895 651L896 652.500L898 651C899 654 896 656.500 893 655.500L887 662Z" fill="#fff" stroke="#444" stroke-width=".8"/>
<circle cx="918" cy="650" r="6" fill="#cfcfcf" stroke="#555" stroke-width="1.300"/>
<path d="M922 654.500L929 661" stroke="#111" stroke-width="2.500"/>
<path d="M928 643V652M925.500 645L928 642.500L930.500 645M925.500 650L928 652.500L930.500 650M912 658H921M914 655.500L911.500 658L914 660.500M919 655.500L921.500 658L919 660.500" fill="none" stroke="#0a2ae0" stroke-width="1"/>
<circle cx="946" cy="650" r="5.500" fill="#fff" stroke="#222" stroke-width="1.300"/>
<path d="M943 650H949" stroke="#0a2ae0" stroke-width="1.500"/>
<path d="M950 654.500L957 661" stroke="#111" stroke-width="2.500"/>
<circle cx="973.500" cy="650" r="5.500" fill="#fff" stroke="#222" stroke-width="1.300"/>
<path d="M970.500 650H976.500M973.500 647V653" stroke="#0a2ae0" stroke-width="1.500"/>
<path d="M978 654.500L985 661" stroke="#111" stroke-width="2.500"/>
</svg>
</body></html>
